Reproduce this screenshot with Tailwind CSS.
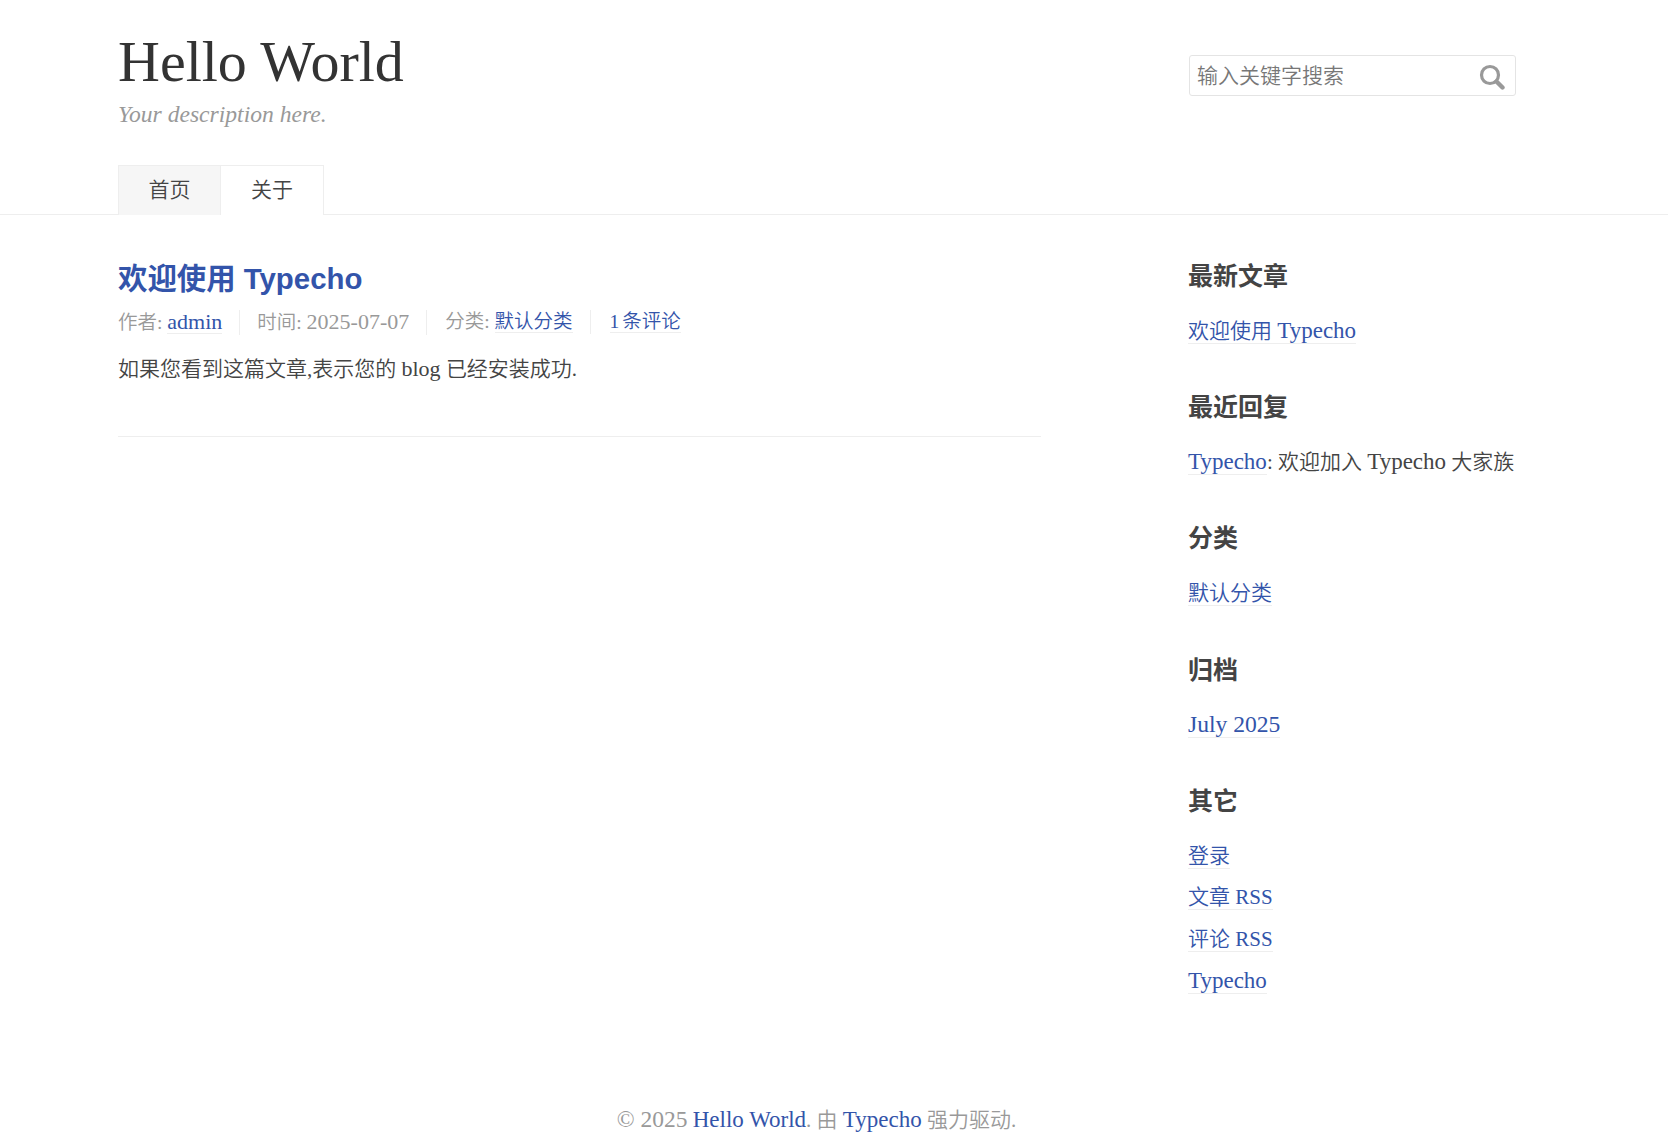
<!DOCTYPE html>
<html lang="zh-CN">
<head>
<meta charset="utf-8">
<title>Hello World</title>
<script src="https://cdn.jsdelivr.net/npm/@tailwindcss/browser@4"></script>
</head>
<body class="bg-white text-[#444] text-[21px] leading-[33px] font-[350] font-['Liberation_Serif','Noto_Sans_CJK_SC',serif]">
<header class="h-[215px] border-b border-[#eee] pl-[118px] relative">
  <div class="flex">
    <div class="w-[1071px] pt-[28px]">
      <a class="block text-[58px] leading-[68px] text-[#333]">Hello World</a>
      <p class="italic text-[#999] text-[23.6px] leading-[30px] mt-[3px]">Your description here.</p>
    </div>
    <form class="mt-[55px] relative w-[327px] h-[41px]">
      <input placeholder="输入关键字搜索" class="w-full h-full border border-[#e4e4e4] rounded-[3px] pl-[7px] pr-[40px] pt-[1px] outline-none text-[21px] font-[350] placeholder:text-[#777]">
      <svg class="absolute left-[289px] top-[7px] w-[28px] h-[28px]" viewBox="0 0 28 28" fill="none" stroke="#999"><circle cx="12" cy="13" r="8.5" stroke-width="3.2"/><path d="M18.5 19.5L24.5 25.5" stroke-width="4.4" stroke-linecap="round"/></svg>
    </form>
  </div>
  <nav class="absolute left-[118px] top-[165px] flex h-[50px] text-[21px]">
    <a class="flex items-center justify-center w-[103px] bg-[#f6f6f6] border border-[#eee] border-b-0 text-[#444]">首页</a>
    <a class="flex items-center justify-center w-[103px] border border-l-0 border-[#eee] border-b-0 bg-white text-[#444]">关于</a>
  </nav>
</header>
<main class="flex pl-[118px]">
  <div class="w-[923px] mr-[147px]">
    <article class="border-b border-[#eee] pt-[43px] h-[222px]">
      <h2 class="font-['Liberation_Sans','Noto_Sans_CJK_SC',sans-serif] font-bold text-[29.4px] leading-[42px] text-[#3354aa]">欢迎使用 Typecho</h2>
      <ul class="flex items-center text-[#999] text-[19.5px] mt-[10px] h-[24px] leading-[24px]">
        <li class="pr-[17px] border-r border-[#eee]">作者: <a class="text-[#3354aa] border-b border-[#eee]"><span class="text-[22px]">admin</span></a></li>
        <li class="px-[17px] border-r border-[#eee]">时间: <span class="text-[22px]">2025-07-07</span></li>
        <li class="pl-[18px] pr-[17px] border-r border-[#eee]">分类: <a class="text-[#3354aa] border-b border-[#eee]">默认分类</a></li>
        <li class="pl-[19px]"><a class="text-[#3354aa] border-b border-[#eee] [word-spacing:-2px]">1 条评论</a></li>
      </ul>
      <p class="mt-[19px] leading-[32px]">如果您看到这篇文章,表示您的 <span class="text-[22px]">blog</span> 已经安装成功.</p>
    </article>
  </div>
  <aside class="w-[328px] pt-[43.5px]">
    <section class="h-[131.4px]">
      <h3 class="font-bold text-[25px] leading-[36px] text-[#444]">最新文章</h3>
      <ul class="mt-[15.5px]"><li class="leading-[41.5px]"><a class="text-[#3354aa] border-b border-[#eee]">欢迎使用 <span class="text-[23px]">Typecho</span></a></li></ul>
    </section>
    <section class="h-[131.4px]">
      <h3 class="font-bold text-[25px] leading-[36px] text-[#444]">最近回复</h3>
      <ul class="mt-[15.5px]"><li class="leading-[41.5px] whitespace-nowrap"><a class="text-[#3354aa] border-b border-[#eee]"><span class="text-[23px]">Typecho</span></a>: 欢迎加入 <span class="text-[23px]">Typecho</span> 大家族</li></ul>
    </section>
    <section class="h-[131.4px]">
      <h3 class="font-bold text-[25px] leading-[36px] text-[#444]">分类</h3>
      <ul class="mt-[15.5px]"><li class="leading-[41.5px]"><a class="text-[#3354aa] border-b border-[#eee]">默认分类</a></li></ul>
    </section>
    <section class="h-[131.4px]">
      <h3 class="font-bold text-[25px] leading-[36px] text-[#444]">归档</h3>
      <ul class="mt-[15.5px]"><li class="leading-[41.5px]"><a class="text-[#3354aa] border-b border-[#eee]"><span class="text-[23.6px]">July 2025</span></a></li></ul>
    </section>
    <section>
      <h3 class="font-bold text-[25px] leading-[36px] text-[#444]">其它</h3>
      <ul class="mt-[15.5px]">
        <li class="leading-[41.5px]"><a class="text-[#3354aa] border-b border-[#eee]">登录</a></li>
        <li class="leading-[41.5px]"><a class="text-[#3354aa] border-b border-[#eee]">文章 RSS</a></li>
        <li class="leading-[41.5px]"><a class="text-[#3354aa] border-b border-[#eee]">评论 RSS</a></li>
        <li class="leading-[41.5px]"><a class="text-[#3354aa] border-b border-[#eee]"><span class="text-[23px]">Typecho</span></a></li>
      </ul>
    </section>
  </aside>
</main>
<footer class="text-center text-[#999] mt-[100px] leading-[33px] pr-[35px]"><span class="text-[23.5px]">© 2025</span> <a class="text-[#3354aa]"><span class="text-[23px]">Hello World</span></a>. 由 <a class="text-[#3354aa]"><span class="text-[23px]">Typecho</span></a> 强力驱动.</footer>
</body>
</html>
